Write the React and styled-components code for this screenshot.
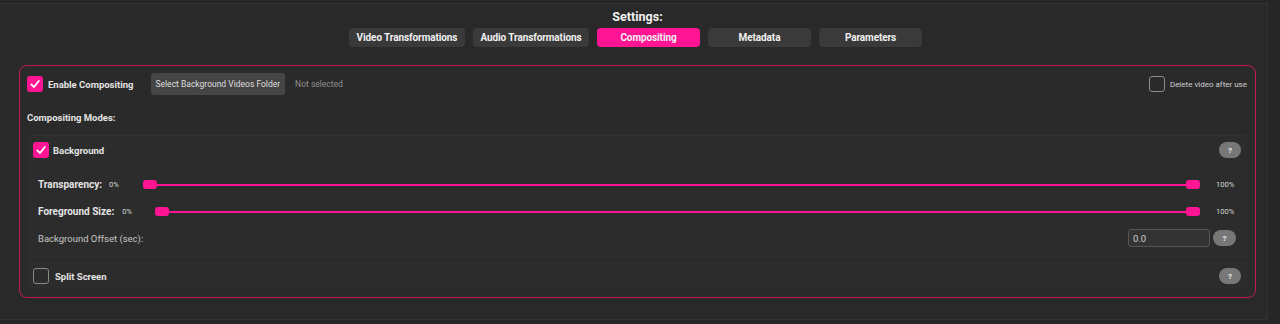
import React from 'react';
import styled, { createGlobalStyle } from 'styled-components';

const Global = createGlobalStyle`
    html, body {
        margin: 0;
        padding: 0;
        background: #262626;
        font-family: Roboto, "Liberation Sans", Arial, sans-serif;
    }
`;

const PINK = '#ff1493';

const Page = styled.div`
    width: 1280px;
    height: 324px;
    overflow: hidden;
    background: #262626;
    padding-top: 3px;
    box-sizing: border-box;
`;

const Frame = styled.div`
    width: 1268px;
    height: 317px;
    box-sizing: border-box;
    background: #292929;
    border-top: 1px solid #333;
    border-right: 1px solid #333;
    border-bottom: 1px solid #333;
    padding: 0 11px 0 19px;
    display: flex;
    flex-direction: column;
`;

const Header = styled.div`
    display: flex;
    flex-direction: column;
    align-items: center;
    padding-top: 5px;
    margin-left: -19px;
    margin-right: -11px;
`;

const Title = styled.div`
    color: #f2f2f2;
    font-size: 12.5px;
    font-weight: 700;
    line-height: 15px;
    margin-bottom: 4px;
    padding-left: 8px;
`;

const Tabs = styled.div`
    display: flex;
    gap: 8px;
    padding-left: 4px;
`;

const Tab = styled.div`
    width: ${p => p.$w}px;
    height: 19px;
    border-radius: 4px;
    background: ${p => (p.$active ? PINK : '#3a3a3a')};
    color: #f0f0f0;
    font-size: 10px;
    font-weight: 700;
    letter-spacing: -0.1px;
    display: flex;
    align-items: center;
    justify-content: center;
`;

const Panel = styled.div`
    margin-top: 18px;
    height: 233px;
    box-sizing: border-box;
    border: 1px solid #c2185b;
    border-radius: 8px;
    background: #2a2a2a;
    padding: 7px 8px 0 7px;
    display: flex;
    flex-direction: column;
`;

const TopRow = styled.div`
    display: flex;
    align-items: center;
    height: 22px;
`;

const Check = styled.div`
    width: ${p => (p.$checked ? 16 : 14)}px;
    height: ${p => (p.$checked ? 16 : 14)}px;
    border-radius: 3px;
    flex-shrink: 0;
    background: ${p => (p.$checked ? PINK : 'transparent')};
    border: ${p => (p.$checked ? 'none' : '1px solid #8a8a8a')};
    display: flex;
    align-items: center;
    justify-content: center;
`;

const BoldLabel = styled.span`
    color: #e4e4e4;
    font-size: ${p => p.$size || 9.5}px;
    font-weight: 700;
    margin-left: ${p => p.$ml || 0}px;
    white-space: nowrap;
`;

const FolderButton = styled.div`
    margin-left: 17px;
    height: 22px;
    padding: 0 5px;
    border-radius: 3px;
    background: #454545;
    color: #dedede;
    font-size: 8.5px;
    display: flex;
    align-items: center;
`;

const Muted = styled.span`
    margin-left: 10px;
    color: #8e8e8e;
    font-size: 8.5px;
`;

const Spacer = styled.div`
    flex: 1;
`;

const SmallText = styled.span`
    color: #d0d0d0;
    font-size: 8px;
    margin-left: 5px;
`;

const SectionTitle = styled.div`
    margin-top: 16px;
    height: 13px;
    display: flex;
    align-items: center;
`;

const Section = styled.div`
    margin-top: ${p => p.$mt || 0}px;
    background: #2c2c2c;
    border-top: 1px solid #303030;
    display: flex;
    flex-direction: column;
    padding: 0 6px 0 6px;
`;

const ModeHeader = styled.div`
    height: ${p => p.$h || 28}px;
    margin-bottom: ${p => p.$mb || 0}px;
    display: flex;
    align-items: center;
`;

const Help = styled.div`
    width: ${p => p.$w || 22}px;
    height: 16px;
    border-radius: 8px;
    background: #777;
    color: #eee;
    font-size: 8px;
    font-weight: 700;
    display: flex;
    align-items: center;
    justify-content: center;
    flex-shrink: 0;
    margin-left: ${p => p.$ml || 0}px;
`;

const SliderRow = styled.div`
    height: 27px;
    display: flex;
    align-items: center;
    padding: 0 7px 0 5px;
`;

const Pct = styled.span`
    color: #d8d8d8;
    font-size: 7.5px;
    margin-left: ${p => p.$ml}px;
    width: ${p => p.$w || 'auto'};
`;

const Track = styled.div`
    flex: 1;
    height: 9px;
    margin-left: ${p => p.$ml}px;
    position: relative;
    display: flex;
    align-items: center;
    &::before {
        content: '';
        display: block;
        width: 100%;
        height: 2px;
        background: ${PINK};
    }
`;

const Thumb = styled.div`
    position: absolute;
    top: 0;
    width: 14px;
    height: 9px;
    border-radius: 3px;
    background: ${PINK};
    ${p => (p.$end ? 'right: 0;' : 'left: 0;')}
`;

const OffsetRow = styled.div`
    height: 26px;
    display: flex;
    align-items: center;
    padding: 0 5px 0 5px;
    margin-bottom: 8px;
`;

const PlainLabel = styled.span`
    color: #c6c6c6;
    font-size: 9.5px;
`;

const NumberInput = styled.div`
    width: 82px;
    height: 18px;
    box-sizing: border-box;
    border: 1px solid #555;
    border-radius: 3px;
    background: #333;
    color: #cfcfcf;
    font-size: 9.5px;
    padding-left: 4px;
    display: flex;
    align-items: center;
`;

const Tick = () => (
    <svg width="12" height="12" viewBox="0 0 12 12">
        <path d="M2.3 6.4 L5 9 L9.8 3" fill="none" stroke="#fff" strokeWidth="1.8" strokeLinecap="round" strokeLinejoin="round" />
    </svg>
);

const Box = ({ checked }) => <Check $checked={checked}>{checked && <Tick />}</Check>;

const Slider = ({ label, startGap, labelGap }) => (
    <SliderRow>
        <BoldLabel $size={10}>{label}</BoldLabel>
        <Pct $ml={labelGap}>0%</Pct>
        <Track $ml={startGap}>
            <Thumb />
            <Thumb $end />
        </Track>
        <Pct $ml={16} $w="18px">100%</Pct>
    </SliderRow>
);

const tabs = [
    { name: 'Video Transformations', w: 116 },
    { name: 'Audio Transformations', w: 116 },
    { name: 'Compositing', w: 103, active: true },
    { name: 'Metadata', w: 103 },
    { name: 'Parameters', w: 103 },
];

export default function App() {
    return (
        <Page>
            <Global />
            <Frame>
                <Header>
                    <Title>Settings:</Title>
                    <Tabs>
                        {tabs.map(t => (
                            <Tab key={t.name} $w={t.w} $active={t.active}>{t.name}</Tab>
                        ))}
                    </Tabs>
                </Header>
                <Panel>
                    <TopRow>
                        <Box checked />
                        <BoldLabel $ml={5}>Enable Compositing</BoldLabel>
                        <FolderButton>Select Background Videos Folder</FolderButton>
                        <Muted>Not selected</Muted>
                        <Spacer />
                        <Box />
                        <SmallText>Delete video after use</SmallText>
                    </TopRow>
                    <SectionTitle>
                        <BoldLabel>Compositing Modes:</BoldLabel>
                    </SectionTitle>
                    <Section $mt={11}>
                        <ModeHeader $mb={7}>
                            <Box checked />
                            <BoldLabel $ml={4}>Background</BoldLabel>
                            <Spacer />
                            <Help>?</Help>
                        </ModeHeader>
                        <Slider label="Transparency:" labelGap={7} startGap={24} />
                        <Slider label="Foreground Size:" labelGap={8} startGap={23} />
                        <OffsetRow>
                            <PlainLabel>Background Offset (sec):</PlainLabel>
                            <Spacer />
                            <NumberInput>0.0</NumberInput>
                            <Help $w={23} $ml={3}>?</Help>
                        </OffsetRow>
                    </Section>
                    <Section $mt={3}>
                        <ModeHeader $h={26}>
                            <Box />
                            <BoldLabel $ml={6}>Split Screen</BoldLabel>
                            <Spacer />
                            <Help>?</Help>
                        </ModeHeader>
                    </Section>
                </Panel>
            </Frame>
        </Page>
    );
}
